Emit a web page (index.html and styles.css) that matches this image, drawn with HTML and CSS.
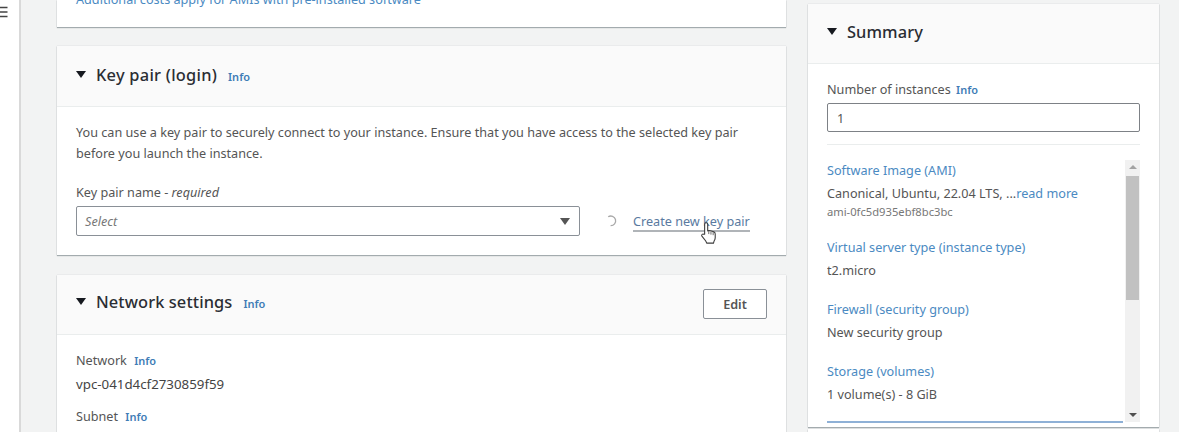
FILE: index.html
```html
<!DOCTYPE html>
<html lang="en">
<head>
<meta charset="utf-8">
<title>Launch an instance</title>
<link rel="stylesheet" href="styles.css">
</head>
<body>
<div class="page">
  <nav class="rail">
    <svg class="menu" width="10" height="12" viewBox="0 0 10 12"><path d="M0 1.500h7.500M0 6h7.500M0 10.500h7.500" stroke="#444" stroke-width="1.300"/></svg>
  </nav>
  <main class="main">
    <section class="card card-top"><a class="link top-link">Additional costs apply for AMIs with pre-installed software</a></section>
    <section class="card card-key">
      <header class="head">
        <span class="caret"></span><h2>Key pair (login)</h2><a class="info">Info</a>
      </header>
      <div class="body">
        <p class="desc">You can use a key pair to securely connect to your instance. Ensure that you have access to the selected key pair before you launch the instance.</p>
        <div class="label">Key pair name - <i>required</i></div>
        <div class="key-row">
          <div class="select"><i>Select</i><span class="select-caret"></span></div>
          <svg class="spin" width="14" height="14" viewBox="0 0 14 14"><path d="M3.200 2.800A4.800 4.800 0 1 1 5.600 11.600" fill="none" stroke="#a9a9a9" stroke-width="1.300"/></svg>
          <span class="create-wrap">
            <a class="create">Create new key pair</a>
            <svg class="hand" width="20" height="24" viewBox="0 0 18 22"><path d="M5 12V3a1.400 1.400 0 0 1 2.800 0v6l1.200-.3 1.400.3 1.400.4 1.600.5c1 .4 1.300 1 1.300 2v3.400c0 1.200-.4 2-1 3l-.6 2H7l-1-2-3.500-4.500c-.8-1.100.8-2.500 1.800-1.500z" fill="#fff" stroke="#3d3d3d" stroke-width="1"/><path d="M8.800 9v3M10.800 9.500V12.500M12.800 10v3" stroke="#555" stroke-width=".8"/></svg>
          </span>
        </div>
      </div>
    </section>
    <section class="card card-net">
      <header class="head head-net">
        <span class="caret"></span><h2>Network settings</h2><a class="info">Info</a>
        <button class="edit">Edit</button>
      </header>
      <div class="body body-net">
        <div class="label">Network <a class="info info-sm">Info</a></div>
        <div class="value">vpc-041d4cf2730859f59</div>
        <div class="label label-sub">Subnet <a class="info info-sm">Info</a></div>
      </div>
    </section>
  </main>
  <aside class="side">
    <section class="card card-sum">
      <header class="head head-sum"><span class="caret"></span><h2>Summary</h2></header>
      <div class="sum-body">
        <div class="label">Number of instances <a class="info info-sm info-count">Info</a></div>
        <div class="count">1</div>
        <div class="scroller">
          <div class="items">
            <div class="item item-first"><a class="link">Software Image (AMI)</a><div class="value">Canonical, Ubuntu, 22.04 LTS, ...<a class="link inline">read more</a></div><div class="ami">ami-0fc5d935ebf8bc3bc</div></div>
            <div class="item"><a class="link">Virtual server type (instance type)</a><div class="value">t2.micro</div></div>
            <div class="item"><a class="link">Firewall (security group)</a><div class="value">New security group</div></div>
            <div class="item"><a class="link">Storage (volumes)</a><div class="value">1 volume(s) - 8 GiB</div></div>
          </div>
          <div class="bar">
            <span class="arrow arrow-up"></span>
            <span class="thumb"></span>
            <span class="arrow arrow-down"></span>
          </div>
        </div>
      </div>
    </section>
    <section class="card card-next"></section>
  </aside>
</div>
</body>
</html>
```
FILE: styles.css
```css
* { box-sizing: border-box; }
html, body { margin: 0; height: 432px; overflow: hidden; }
body { font-family: "Noto Sans", "Open Sans", sans-serif; font-size: 12.65px; color: #444; background: #f2f3f3; }
.page { display: flex; height: 432px; overflow: hidden; }
.rail { width: 21px; flex: none; background: #fff; border-right: 2px solid #d9d9d9; padding-top: 6px; }
.menu { display: block; }
.main { width: 729px; margin-left: 36px; flex: none; }
.side { width: 351px; margin-left: 22px; flex: none; padding-top: 4px; }
.card { background: #fff; box-shadow: 0 1px 1px 0 rgba(0,22,29,.3), 0 0 1px 0 rgba(0,22,29,.2); }
.card-top { height: 27px; overflow: hidden; padding-left: 19px; }
.top-link { display: block; margin-top: -9px; line-height: 17px; }
.card-key { height: 209px; margin-top: 19px; }
.card-key h2 { letter-spacing: .25px; }
.card-net { margin-top: 20px; height: 200px; }
.head { display: flex; align-items: center; height: 61px; background: #fafafa; border-bottom: 1px solid #eaeded; padding: 0 19px 3px; }
.caret { width: 0; height: 0; border-left: 5px solid transparent; border-right: 5px solid transparent; border-top: 7px solid #16191f; margin-right: 10px; }
h2 { margin: 0; font-size: 16.400px; font-weight: 500; color: #2a2d33; letter-spacing: .1px; }
.info { color: #3f7cb6; font-size: 11px; font-weight: 600; margin-left: 11px; position: relative; top: 2px; }
.info-sm { margin-left: 4px; top: 0; }
.info-count { margin-left: 2px; }
.link { color: #4b8ac2; }
.body { padding: 15px 19px 0; }
.desc { margin: 0; line-height: 21px; width: 680px; color: #555; }
.label { color: #555; line-height: 17px; }
.card-key .label { margin-top: 20px; }
.key-row { display: flex; align-items: center; margin-top: 5px; }
.select { width: 504px; height: 30px; flex: none; border: 1px solid #8a9097; border-radius: 2px; display: flex; align-items: center; justify-content: space-between; padding: 0 9px 0 8px; color: #777; }
.select-caret { width: 0; height: 0; border-left: 5.500px solid transparent; border-right: 5.500px solid transparent; border-top: 7px solid #555; }
.spin { margin-left: 25px; flex: none; }
.create-wrap { position: relative; margin-left: 14px; flex: none; }
.create { color: #5a7aa0; border-bottom: 2px solid #b0b4b8; display: block; line-height: 17px; white-space: nowrap; position: relative; top: 1px; }
.hand { position: absolute; left: 66px; top: 9px; }
.head-net { height: 60px; padding-bottom: 2px; }
.head-net h2 { margin-bottom: 4px; }
.head-net .info { top: 0; }
.head-net .caret { position: relative; top: -2px; }
.edit { margin-left: auto; width: 64px; height: 30px; background: #fff; border: 1px solid #8a9097; border-radius: 2px; font: 600 12.65px "Noto Sans", sans-serif; color: #555; }
.body-net { padding-top: 17px; }
.body-net .value { margin-top: 7px; line-height: 17px; font-size: 13.300px; }
.label-sub { margin-top: 15px; }
.card-sum { height: 423px; overflow: hidden; }
.head-sum { height: 60px; padding-bottom: 5px; }
.head-sum .caret { margin-right: 10px; }
.sum-body { padding: 17px 19px 0; }
.count { height: 29px; margin-top: 5px; border: 1px solid #7d8186; border-radius: 2px; padding: 1px 9px 0; line-height: 27px; color: #555; }
.scroller { margin-top: 12px; border-top: 1px solid #eaeded; height: 279px; display: flex; }
.items { width: 296px; flex: none; height: 278px; border-bottom: 2px solid #8eb0d6; padding-top: 17px; overflow: hidden; }
.item { margin-bottom: 22px; }
.item .link { display: block; line-height: 17px; }
.item .inline { display: inline; }
.item .value { line-height: 17px; margin-top: 6px; color: #555; white-space: nowrap; }
.ami { font-size: 11.200px; line-height: 14px; margin-top: 3px; color: #777; }
.item-first { margin-bottom: 20px; }
.bar { width: 15px; margin-left: 2px; height: 262px; margin-top: 15px; background: #f1f1f1; display: flex; flex-direction: column; align-items: center; flex: none; }
.arrow { width: 0; height: 0; border-left: 4px solid transparent; border-right: 4px solid transparent; }
.arrow-up { border-bottom: 4px solid #a3a3a3; margin: 5px 0 7px; }
.thumb { width: 13px; height: 124px; background: #c1c1c1; }
.arrow-down { border-top: 4px solid #505050; margin-top: auto; margin-bottom: 5px; }
.card-next { height: 10px; margin-top: 2px; }
```
